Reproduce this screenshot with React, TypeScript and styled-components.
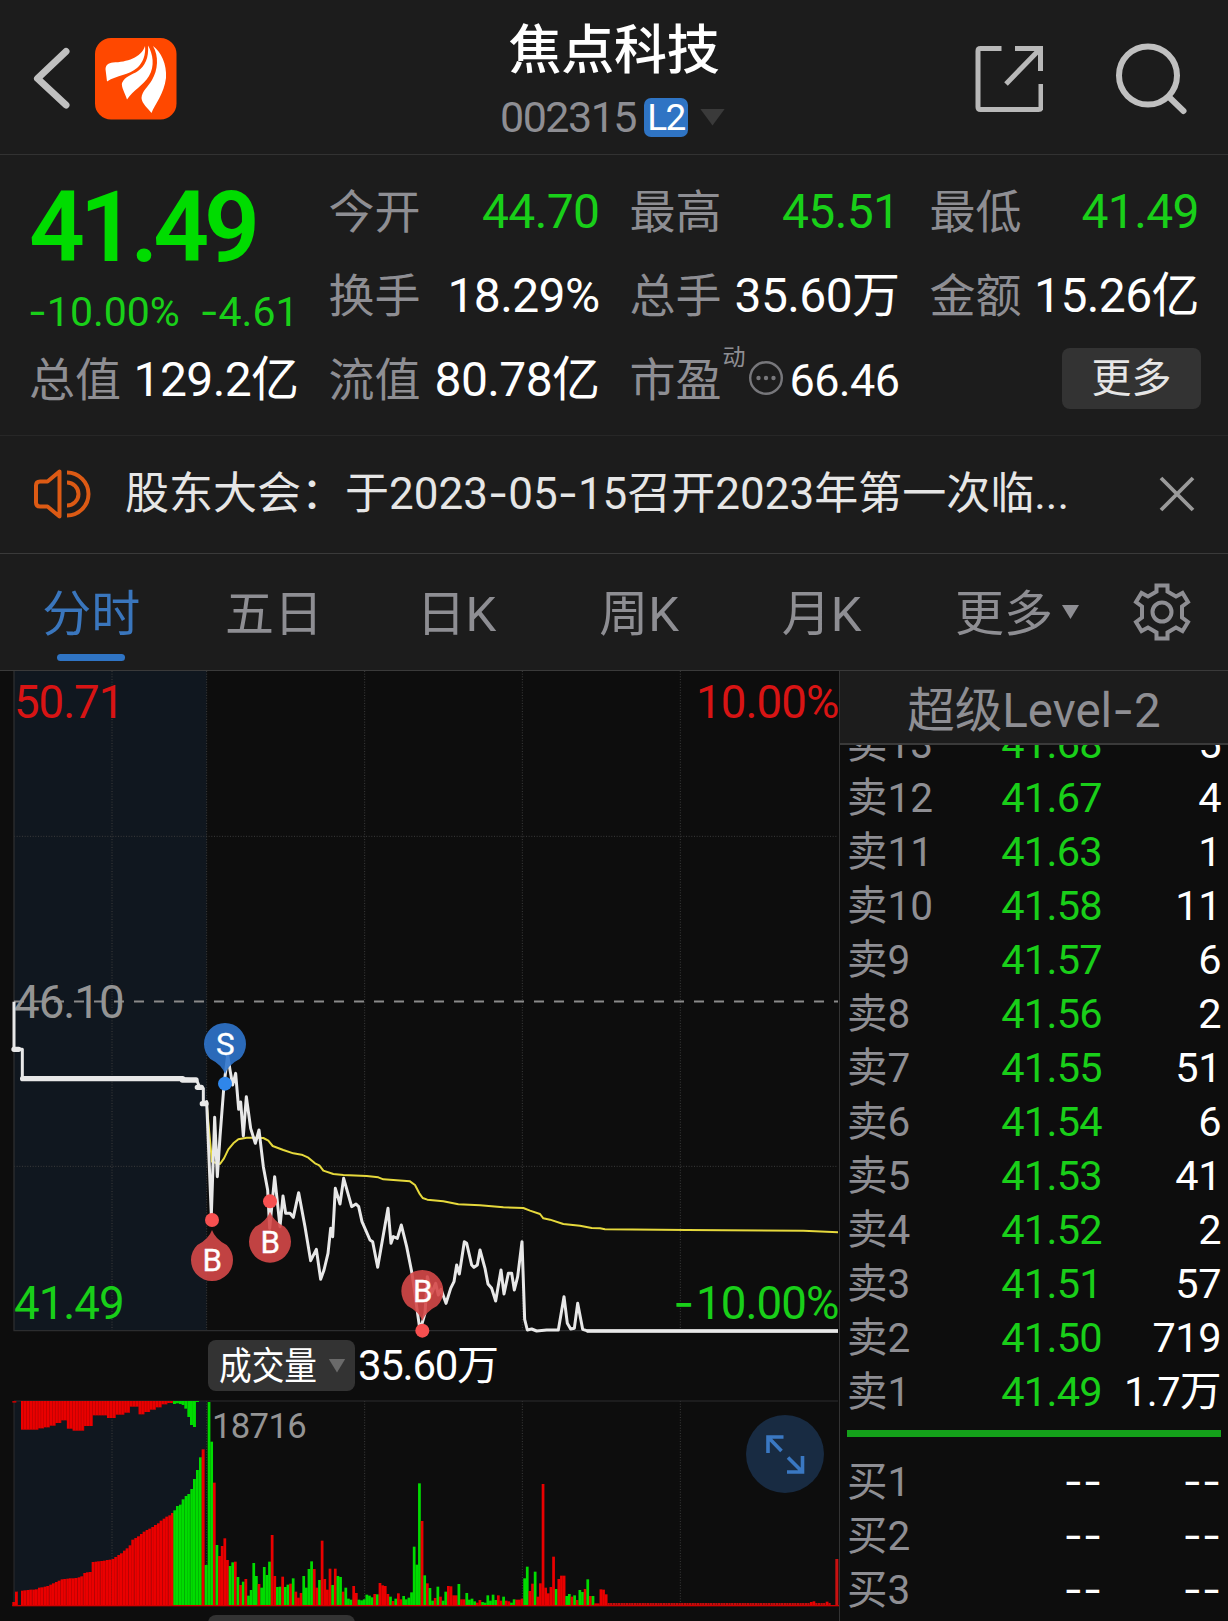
import React from "react";
import styled, { createGlobalStyle } from "styled-components";

const GREEN = "#19cf19";
const RED = "#d81414";
const GRAY = "#8e8e93";
const BLUE = "#2f74c4";

const GlobalStyle = createGlobalStyle`
  body {
    margin: 0;
    background: #0d0d0d;
    font-family: Roboto, "Noto Sans CJK SC", sans-serif;
  }
  * { box-sizing: border-box; }
`;

const Page = styled.div`
  width: 1228px;
  height: 1621px;
  overflow: hidden;
  display: flex;
  flex-direction: column;
  background: #1c1c1c;
  color: #fff;
  white-space: nowrap;
`;

/* ---------- header ---------- */

const Header = styled.header`
  height: 155px;
  flex: none;
  border-bottom: 1px solid #323232;
  display: grid;
  grid-template-columns: 414px 400px 414px;
`;

const HeaderLeft = styled.div`
  display: flex;
  align-items: flex-start;
  padding: 38px 0 0 32px;
  gap: 23px;
`;

const HeaderRight = styled.div`
  display: flex;
  justify-content: flex-end;
  padding: 42px 41px 0 0;
  gap: 72px;
`;

const TitleBlock = styled.div`
  display: flex;
  flex-direction: column;
  align-items: center;
`;

const StockName = styled.h1`
  margin: 23px 0 0;
  font-size: 53px;
  line-height: 56px;
  font-weight: 500;
  letter-spacing: -0.3px;
`;

const CodeRow = styled.div`
  margin-top: 18px;
  margin-left: -3px;
  height: 40px;
  display: flex;
  align-items: center;
  color: ${GRAY};
  font-size: 43px;
  letter-spacing: -1.5px;
`;

const LevelBadge = styled.span`
  margin-left: 8px;
  width: 44px;
  height: 39px;
  border-radius: 7px;
  background: ${BLUE};
  color: #fff;
  font-size: 37px;
  line-height: 39px;
  text-align: center;
`;

const Caret = styled.i<{ $w: number; $h: number; $color: string; $gap: number }>`
  width: ${(p) => p.$w}px;
  height: ${(p) => p.$h}px;
  margin-left: ${(p) => p.$gap}px;
  background: ${(p) => p.$color};
  clip-path: polygon(0 0, 100% 0, 50% 100%);
`;

const Dash = styled.span`
  font-family: Inter, sans-serif;
  letter-spacing: 0;
`;

/* ---------- quote ---------- */

const Quote = styled.section`
  height: 281px;
  flex: none;
  border-bottom: 1px solid #272727;
  padding: 15px 28px 0 29px;
  display: grid;
  grid-template-columns: 269.5px 271px 270px 269.5px;
  column-gap: 30px;
  grid-template-rows: 84px 84px 84px;
`;

const PriceCell = styled.div`
  grid-row: 1 / span 2;
  display: flex;
  flex-direction: column;
`;

const LastPrice = styled.div`
  margin-top: 6px;
  font-size: 98px;
  line-height: 104px;
  font-weight: 600;
  letter-spacing: -5.2px;
  color: #00dc00;
`;

const ChangeRow = styled.div`
  margin: 7px 0 0 -1px;
  display: flex;
  justify-content: space-between;
  color: ${GREEN};
  font-size: 41px;
  line-height: 48px;
`;

const Cell = styled.div`
  display: flex;
  align-items: center;
  justify-content: space-between;
`;

const CellLabel = styled.span`
  font-size: 46px;
  line-height: 68px;
  color: ${GRAY};
`;

const CellValue = styled.span<{ $green?: boolean }>`
  font-size: 48px;
  line-height: 68px;
  letter-spacing: -0.6px;
  color: ${(p) => (p.$green ? GREEN : "#fff")};
`;

const PeGroup = styled.span`
  display: flex;
  align-items: center;
`;

const DynamicMark = styled.sup`
  align-self: flex-start;
  margin: 0 0 0 1px;
  font-size: 23px;
  line-height: 24px;
  color: ${GRAY};
`;

const PeIcon = styled.svg`
  margin: -4px 0 0 2px;
`;

const PeValue = styled.span`
  font-size: 45px;
  line-height: 68px;
  letter-spacing: -0.6px;
  padding-top: 2px;
`;

const MoreButton = styled.button`
  justify-self: end;
  align-self: center;
  margin: 0 -2px 3px 0;
  width: 139px;
  height: 61px;
  border: 0;
  border-radius: 8px;
  background: #333;
  color: #e6e6e6;
  font: 400 40px/61px Roboto, "Noto Sans CJK SC", sans-serif;
  padding: 0;
`;

/* ---------- notice ---------- */

const Notice = styled.section`
  height: 118px;
  flex: none;
  border-bottom: 1px solid #3a3a3a;
  display: flex;
  align-items: center;
  padding: 0 32px 2px 32px;
`;

const NoticeText = styled.div`
  margin-left: 33px;
  flex: 1;
  font-size: 44px;
  line-height: 60px;
  color: #e6e6e6;
`;

/* ---------- period tabs ---------- */

const Tabs = styled.nav`
  height: 117px;
  flex: none;
  border-bottom: 1px solid #3a3a3a;
  display: flex;
`;

const Tab = styled.div<{ $active?: boolean }>`
  width: 182.6px;
  display: flex;
  flex-direction: column;
  align-items: center;
  padding-top: 24px;
  font-size: 49px;
  line-height: 74px;
  color: ${(p) => (p.$active ? "#3a76bd" : GRAY)};

  &::after {
    content: "";
    margin-top: 2px;
    width: 68px;
    height: 7px;
    border-radius: 4px;
    background: ${(p) => (p.$active ? BLUE : "transparent")};
  }
`;

const MoreTab = styled.div`
  margin-left: 42px;
  display: flex;
  align-items: flex-start;
  padding-top: 24px;
  font-size: 49px;
  line-height: 74px;
  color: ${GRAY};

  & > i {
    margin-top: 27px;
  }
`;

const Gear = styled.svg`
  margin: 28px 0 0 54px;
`;

/* ---------- body ---------- */

const Body = styled.main`
  flex: 1;
  min-height: 0;
  display: flex;
  background: #0d0d0d;
`;

const ChartPane = styled.div`
  width: 839px;
  position: relative;
`;

const ChartSvg = styled.svg`
  display: block;
`;

const IndicatorBar = styled.div<{ $top: number }>`
  position: absolute;
  left: 207.5px;
  top: ${(p) => p.$top}px;
  display: flex;
  align-items: center;
`;

const IndicatorPill = styled.div`
  width: 147.5px;
  height: 51px;
  border-radius: 8px;
  background: #333;
  display: flex;
  align-items: center;
  padding-left: 11px;
`;

const PillText = styled.span`
  width: 98px;
  font-size: 38px;
  line-height: 50px;
  transform: scaleX(0.86);
  transform-origin: left;
`;

const IndicatorValue = styled.span`
  margin-left: 3px;
  font-size: 42px;
  line-height: 51px;
  letter-spacing: -1.3px;
`;

const ExpandButton = styled.div`
  position: absolute;
  left: 746px;
  top: 744px;
  width: 78px;
  height: 78px;
  border-radius: 50%;
  background: #182b42;
`;

/* ---------- order book ---------- */

const Book = styled.aside`
  flex: 1;
  border-left: 1px solid #333;
  display: flex;
  flex-direction: column;
`;

const BookHeader = styled.div`
  height: 74px;
  flex: none;
  background: #1c1c1c;
  border-bottom: 2px solid #3a3a3a;
  text-align: center;
  font-size: 47.5px;
  line-height: 77px;
  color: ${GRAY};
`;

const AskList = styled.div`
  height: 685px;
  flex: none;
  overflow: hidden;
  display: flex;
  flex-direction: column;
  justify-content: flex-end;
  padding-bottom: 11px;
`;

const BidList = styled.div`
  padding-top: 17px;
`;

const BookRow = styled.div`
  height: 54px;
  flex: none;
  display: grid;
  grid-template-columns: 133px 122px 1fr;
  align-items: center;
  padding: 0 7px 0 7px;
  font-size: 41.5px;
  line-height: 54px;
`;

const Side = styled.span`
  color: ${GRAY};
  font-size: 40.5px;
`;

const Price = styled.span<{ $empty?: boolean }>`
  text-align: right;
  letter-spacing: -0.7px;
  color: ${(p) => (p.$empty ? "#fff" : GREEN)};
`;

const Volume = styled.span`
  text-align: right;
  letter-spacing: -0.5px;
`;

const Divider = styled.div`
  height: 7px;
  flex: none;
  margin: 0 7px 0 7px;
  background: #14a01a;
`;

/* ---------- data ---------- */

const asks: [string, string, string][] = [
  ["13", "41.68", "5"],
  ["12", "41.67", "4"],
  ["11", "41.63", "1"],
  ["10", "41.58", "11"],
  ["9", "41.57", "6"],
  ["8", "41.56", "2"],
  ["7", "41.55", "51"],
  ["6", "41.54", "6"],
  ["5", "41.53", "41"],
  ["4", "41.52", "2"],
  ["3", "41.51", "57"],
  ["2", "41.50", "719"],
  ["1", "41.49", "1.7万"],
];

const bids = ["1", "2", "3"];

/* Chart drawings use thirds of a pixel as their unit. */
const priceLine =
  "42,65 42,208 67,208 67,296 545,296 590,300 598,320 610,325 610,370 620,365 634,705 644,412 652,590 660,470 672,315 683,225 690,270 698,315 707,280 716,388 722,366 730,468 739,350 752,445 766,490 777,450 790,560 803,630 809,745 824,590 840,740 849,648 857,700 870,700 880,712 896,638 915,740 932,842 949,808 962,898 972,870 984,820 992,745 998,770 1006,625 1020,672 1031,595 1055,680 1068,672 1076,680 1086,725 1110,780 1118,785 1133,862 1164,685 1173,790 1180,770 1192,775 1204,735 1220,800 1236,880 1260,1052 1275,1000 1282,890 1295,940 1307,910 1315,945 1323,928 1338,970 1352,925 1362,905 1370,855 1378,882 1393,785 1400,790 1415,855 1422,862 1432,855 1440,810 1455,865 1464,912 1475,925 1487,963 1503,870 1512,942 1525,880 1535,880 1543,930 1553,890 1566,785 1574,1018 1582,1050 1595,1047 1610,1053 1640,1050 1675,1050 1692,950 1702,1030 1712,1047 1723,1045 1733,970 1748,1048 1760,1052 2514,1053";

const averageLine =
  "620,370 628,460 636,545 660,552 672,535 685,508 700,490 715,478 740,473 790,474 805,482 818,498 850,510 880,520 905,524 925,533 945,550 958,556 970,572 1000,582 1030,585 1100,588 1135,592 1150,598 1230,604 1245,615 1258,640 1268,654 1282,659 1330,664 1375,673 1440,676 1510,682 1570,684 1590,692 1620,702 1630,715 1650,719 1690,732 1740,737 1775,744 1800,745 1815,748 2060,750 2410,752 2514,757";

/* [width in bars, height] runs of the opening auction */
const auctionUnmatched: [number, number][] = [
  [6, 86], [2, 82], [2, 79], [2, 74], [2, 66], [2, 58],
  [2, 83], [4, 89], [3, 75], [5, 43], [3, 51], [3, 41],
  [2, 35], [3, 17], [2, 40], [2, 33], [2, 26], [2, 19],
  [2, 10], [3, 6],
];

const auctionMatched: [number, number, string][] = [
  [37, 12, "r"], [45, 43, "r"], [63, 46, "r"], [71, 47, "r"], [80, 48, "r"], [88, 49, "r"],
  [97, 49, "r"], [105, 50, "r"], [114, 55, "r"], [122, 56, "r"], [131, 58, "r"], [139, 60, "r"],
  [148, 64, "r"], [156, 68, "r"], [165, 72, "r"], [173, 76, "r"], [182, 80, "r"], [190, 81, "r"],
  [199, 82, "r"], [207, 83, "r"], [216, 83, "r"], [224, 84, "r"], [233, 86, "r"], [241, 89, "r"],
  [250, 99, "r"], [258, 101, "r"], [267, 102, "r"], [275, 132, "r"], [284, 133, "r"], [292, 134, "r"],
  [301, 135, "r"], [309, 136, "r"], [318, 138, "r"], [326, 139, "r"], [335, 141, "r"], [343, 147, "r"],
  [352, 153, "r"], [360, 158, "r"], [369, 166, "r"], [377, 173, "r"], [386, 182, "r"], [394, 199, "r"],
  [403, 204, "r"], [411, 209, "r"], [420, 216, "r"], [428, 223, "r"], [437, 228, "r"], [445, 232, "r"],
  [454, 237, "r"], [462, 243, "r"], [471, 248, "r"], [479, 256, "r"], [488, 262, "r"], [496, 268, "r"],
  [505, 272, "r"], [513, 279, "r"],
  [520, 287, "g"], [528, 300, "g"], [537, 304, "g"], [545, 320, "g"], [554, 330, "g"], [562, 336, "g"],
  [571, 351, "g"], [579, 381, "g"], [588, 408, "g"], [597, 446, "g"], [605, 470, "r"], [614, 123, "g"],
];

const auctionGreenTop: [number, number][] = [
  [519, 9], [528, 7], [537, 9], [545, 12], [553, 23], [562, 48], [570, 72], [579, 78], [588, 3],
];

const minuteVolume =
  "g612 g493 r370 g183 r150 r180 r203 r138 g120 g131 r133 g87 r63 g73 r81 g31 g48 g129 g90 r66 g55 g117 g93 g133 r213 r90 g57 g58 r88 g57 g64 r67 g83 r43 r25 r39 g90 g55 g111 g134 r111 r55 g78 r196 r81 r49 r112 g63 r112 g90 g87 r43 g55 g22 g19 r60 r39 g19 g17 g20 g34 g31 g26 r36 g35 r69 r62 r60 r36 g28 r15 g22 r38 r20 g30 g20 g25 g41 g178 g124 g368 r255 g92 r68 g54 g16 r24 g58 r28 g16 g43 r60 r59 r32 r32 g66 r20 r20 g39 g19 g22 g14 r10 r18 g12 g10 g32 g16 g34 g18 r32 r16 g28 r16 r14 g10 g20 r19 r19 r22 g83 g118 r45 r67 g103 r28 r68 r366 r55 r38 r57 r148 g51 r81 r91 r91 g30 g36 r28 g32 r18 g48 g42 r51 g80 r30 g30 r8 r8 r50 r49 r35"
    .split(" ")
    .map((s) => ({ c: s[0], h: Number(s.slice(1)) }));

while (minuteVolume.length < 237) minuteVolume.push({ c: "r", h: 9 });
minuteVolume[229] = { c: "r", h: 12 };
minuteVolume[230] = { c: "r", h: 14 };
minuteVolume[235] = { c: "r", h: 13 };

const barFill = (c: string) => (c === "r" ? "#ea0000" : "#00dc00");

function VolumeBars() {
  let x = 63;
  const top: React.ReactElement[] = [];
  auctionUnmatched.forEach(([n, h], k) => {
    for (let i = 0; i < n; i++) {
      top.push(<rect key={`${k}-${i}`} x={x} y={213} width={8.7} height={h} fill="#ea0000" />);
      top.push(<rect key={`${k}-${i}s`} x={x + 7.2} y={213} width={1.6} height={h} fill="#b40000" />);
      x += 8.6;
    }
  });
  return (
    <g transform="translate(0 1977)">
      <rect x={37} y={213} width={12} height={5} fill="#c00000" />
      {top}
      {auctionGreenTop.map(([gx, h]) => (
        <rect key={gx} x={gx} y={213} width={8.8} height={h} fill="#00dc00" />
      ))}
      {auctionMatched.map(([ax, h, c]) => (
        <g key={ax}>
          <rect x={ax} y={828 - h} width={8.7} height={h} fill={barFill(c)} />
          <rect x={ax + 7.2} y={828 - h} width={1.5} height={h} fill={c === "r" ? "#b40000" : "#00a800"} />
        </g>
      ))}
      {minuteVolume.map((b, i) => (
        <rect
          key={i}
          x={623 + i * 7.89}
          y={828 - b.h}
          width={b.h === 9 ? 7 : 8.2}
          height={b.h}
          fill={b.h === 9 ? "#c20c0c" : barFill(b.c)}
        />
      ))}
      <rect x={2506} y={687} width={9} height={141} fill="#c81010" />
      <rect x={37} y={825} width={2480} height={4} fill="#d00000" />
    </g>
  );
}

function Marker({ x, y, tip, dot, kind }: { x: number; y: number; tip: "up" | "down"; dot: number; kind: "S" | "B" }) {
  const s = tip === "up" ? -1 : 1;
  const fill = kind === "S" ? "#2f74cc" : "#d54848";
  return (
    <g>
      <circle cx={x} cy={dot} r={21} fill={kind === "S" ? "#2f86ea" : "#f65050"} />
      <g transform={`translate(${x} ${y})`}>
        <path
          d={s === 1 ? "M-44 45 Q-10 62 0 90 Q10 62 44 45 A63 63 0 1 0 -44 45Z" : "M-44 -45 Q-10 -62 0 -90 Q10 -62 44 -45 A63 63 0 1 1 -44 -45Z"}
          fill={fill}
          fillOpacity={0.9}
        />
        <text x={1} y={33} textAnchor="middle" fontSize={94} fontWeight={400} fill="#fff" stroke="#fff" strokeWidth={1}>
          {kind}
        </text>
      </g>
    </g>
  );
}

function Chart() {
  const grid = { stroke: "#3c3c3c", strokeWidth: 3, strokeDasharray: "3 5" };
  return (
    <ChartSvg width={839} height={950} viewBox="0 0 2517 2850">
      <rect x={42} y={0} width={578} height={1979} fill="#10171f" />
      <rect x={42} y={2190} width={578} height={615} fill="#10171f" />
      {[336, 620, 1094, 1567, 2041].map((x) => (
        <g key={x}>
          <line x1={x} x2={x} y1={0} y2={1979} {...grid} />
          <line x1={x} x2={x} y1={2190} y2={2805} {...grid} />
        </g>
      ))}
      <line x1={42} x2={2514} y1={496} y2={496} {...grid} />
      <line x1={42} x2={2514} y1={1486} y2={1486} {...grid} />
      <path d="M42 0V1979H2514" fill="none" stroke="#2c2d2f" strokeWidth={4} />
      <path d="M42 2805V2190H2514" fill="none" stroke="#2c2d2f" strokeWidth={3} />
      <line x1={42} x2={2514} y1={991.5} y2={991.5} stroke="#8a8a8a" strokeWidth={5.5} strokeDasharray="30 30" />

      <g fontSize={137}>
        <text x={42} y={141} fill={RED} textLength={331}>50.71</text>
        <text x={2088} y={141} fill={RED} textLength={430}>10.00%</text>
        <text x={42} y={1041} fill="#949494" textLength={332}>46.10</text>
        <text x={42} y={1944} fill={GREEN} textLength={332}>41.49</text>
        <text x={2088} y={1944} fill={GREEN} textLength={430}>10.00%</text>
        <text x={2020} y={1944} fill={GREEN} fontFamily="Inter">-</text>
        <text x={636} y={2301} fill="#949494" fontSize={104} textLength={284}>18716</text>
      </g>

      <g transform="translate(0 927)">
        <polyline points={averageLine} fill="none" stroke="#e6d93c" strokeWidth={6} strokeLinejoin="round" />
        <polyline points={priceLine} fill="none" stroke="#e8e8e8" strokeWidth={9} strokeLinejoin="round" />
        <path d="M42 208H56M68 296H548M547 300H588M592 322H604M607 371H618" stroke="#e8e8e8" strokeWidth={16} strokeLinecap="round" />
        <path d="M1760 1053H2514" stroke="#e8e8e8" strokeWidth={10} />
        <Marker kind="S" x={675} y={192} tip="down" dot={311} />
        <Marker kind="B" x={636} y={840} tip="up" dot={720} />
        <Marker kind="B" x={810} y={785} tip="up" dot={664} />
        <Marker kind="B" x={1267} y={933} tip="down" dot={1052} />
      </g>

      <VolumeBars />
    </ChartSvg>
  );
}

function Field({ label, value, green }: { label: string; value: string; green?: boolean }) {
  return (
    <Cell>
      <CellLabel>{label}</CellLabel>
      <CellValue $green={green}>{value}</CellValue>
    </Cell>
  );
}

export default function App() {
  return (
    <Page>
      <GlobalStyle />
      <Header>
        <HeaderLeft>
          <svg width="40" height="80" viewBox="0 0 40 80" fill="none">
            <path d="M34 13.500L5.500 40.500L34 67" stroke="#c0c0c0" strokeWidth="7" strokeLinecap="round" strokeLinejoin="round" />
          </svg>
          <svg width="82" height="82" viewBox="0 0 82 82">
            <rect width="81.500" height="81.500" rx="16" fill="#ff4800" />
            <g fill="#fff">
              <path d="M50 8C46 20 32 24 18 24.500C13 25 11 27 10.500 31L12 43.500C22 37 34 37 42 30C48 25 51 16 50 8Z" />
              <path d="M53 7.500C54 20 50 28 43 33C37 37 30 38 27 45C26 49 30 55 32 61.500C38 52 48 48 54 38C60 28 58 16 53 7.500Z" />
              <path d="M58 8C64 18 63 32 57 42C53 49 47 53 46.500 60C47 66 53 70 56.500 75C60 66 69 56 71 40C72 26 66 14 58 8Z" />
            </g>
          </svg>
        </HeaderLeft>
        <TitleBlock>
          <StockName>焦点科技</StockName>
          <CodeRow>
            002315
            <LevelBadge>L2</LevelBadge>
            <Caret $w={25} $h={17} $gap={12} $color="#3a3a3a" />
          </CodeRow>
        </TitleBlock>
        <HeaderRight>
          <svg width="70" height="72" viewBox="0 0 70 72" fill="none" stroke="#b8b8b8" strokeWidth="5">
            <path d="M30 6.500H9Q6.500 6.500 6.500 9V65Q6.500 67.500 9 67.500H67Q69.500 67.500 69.500 65V42" transform="translate(-1.500 0)" />
            <path d="M42 6.500H67.500V29M67 7L33 42" />
          </svg>
          <svg width="72" height="74" viewBox="0 0 72 74" fill="none" stroke="#c0c0c0" strokeWidth="6" strokeLinecap="round">
            <circle cx="33" cy="33.500" r="29" />
            <path d="M54 55L68.500 69" />
          </svg>
        </HeaderRight>
      </Header>

      <Quote>
        <PriceCell>
          <LastPrice>41.49</LastPrice>
          <ChangeRow>
            <span><Dash>-</Dash>10.00%</span>
            <span><Dash>-</Dash>4.61</span>
          </ChangeRow>
        </PriceCell>
        <Field label="今开" value="44.70" green />
        <Field label="最高" value="45.51" green />
        <Field label="最低" value="41.49" green />
        <Field label="换手" value="18.29%" />
        <Field label="总手" value="35.60万" />
        <Field label="金额" value="15.26亿" />
        <Field label="总值" value="129.2亿" />
        <Field label="流值" value="80.78亿" />
        <Cell>
          <PeGroup>
            <CellLabel>市盈</CellLabel>
            <DynamicMark>动</DynamicMark>
            <PeIcon width="36" height="36" viewBox="0 0 36 36">
              <circle cx="18" cy="18" r="15.800" fill="none" stroke="#77777b" strokeWidth="2.400" />
              <g fill="#77777b">
                <circle cx="10.500" cy="18" r="2.200" />
                <circle cx="18" cy="18" r="2.200" />
                <circle cx="25.500" cy="18" r="2.200" />
              </g>
            </PeIcon>
          </PeGroup>
          <PeValue>66.46</PeValue>
        </Cell>
        <MoreButton>更多</MoreButton>
      </Quote>

      <Notice>
        <svg width="60" height="52" viewBox="0 0 60 52" fill="none" stroke="#dc5a14" strokeWidth="4" strokeLinejoin="round">
          <path d="M27.500 3.500V48.500L15.500 38.500H8Q4 38.500 4 34.500V17.500Q4 13.500 8 13.500H15.500Z" />
          <path d="M35 14.500A11.500 11.500 0 0 1 35 37.500M35 4.500A21.500 21.500 0 0 1 35 47.500" />
        </svg>
        <NoticeText>
          股东大会：于2023<Dash>-</Dash>05<Dash>-</Dash>15召开2023年第一次临...
        </NoticeText>
        <svg width="38" height="38" viewBox="0 0 38 38" stroke="#9a9a9a" strokeWidth="3.800">
          <path d="M3 3L35 35M35 3L3 35" />
        </svg>
      </Notice>

      <Tabs>
        <Tab $active>分时</Tab>
        <Tab>五日</Tab>
        <Tab>日K</Tab>
        <Tab>周K</Tab>
        <Tab>月K</Tab>
        <MoreTab>
          更多
          <Caret $w={17} $h={14} $gap={9} $color={GRAY} />
        </MoreTab>
        <Gear width="58" height="60" viewBox="0 0 58 60" fill="none" stroke={GRAY} strokeWidth="4" strokeLinejoin="miter">
          <path d="M23.500 3.500H34.500V9.500L43 14.500L49.500 11L55 20L49 24.500V35.500L55 40L49.500 49L43 45.500L34.500 50.500V56.500H23.500V50.500L15 45.500L8.500 49L3 40L9 35.500V24.500L3 20L8.500 11L15 14.500L23.500 9.500Z" />
          <circle cx="29" cy="30" r="9.500" />
        </Gear>
      </Tabs>

      <Body>
        <ChartPane>
          <Chart />
          <IndicatorBar $top={669}>
            <IndicatorPill>
              <PillText>成交量</PillText>
              <Caret $w={17} $h={14} $gap={12} $color="#6a6a6a" />
            </IndicatorPill>
            <IndicatorValue>35.60万</IndicatorValue>
          </IndicatorBar>
          <IndicatorBar $top={944}>
            <IndicatorPill>
              <PillText>散户线</PillText>
            </IndicatorPill>
          </IndicatorBar>
          <ExpandButton>
            <svg width="78" height="78" viewBox="0 0 78 78" fill="none" stroke="#3a78c2" strokeWidth="3.600">
              <path d="M37.500 22H22V38M22 22L35.500 36M41 57H56.500V41M56.500 57L42 42.500" />
            </svg>
          </ExpandButton>
        </ChartPane>

        <Book>
          <BookHeader>
            超级Level<Dash>-</Dash>2
          </BookHeader>
          <AskList>
            {asks.map(([n, price, vol]) => (
              <BookRow key={n}>
                <Side>卖{n}</Side>
                <Price>{price}</Price>
                <Volume>{vol}</Volume>
              </BookRow>
            ))}
          </AskList>
          <Divider />
          <BidList>
            {bids.map((n) => (
              <BookRow key={n}>
                <Side>买{n}</Side>
                <Price $empty><Dash>--</Dash></Price>
                <Volume><Dash>--</Dash></Volume>
              </BookRow>
            ))}
          </BidList>
        </Book>
      </Body>
    </Page>
  );
}
